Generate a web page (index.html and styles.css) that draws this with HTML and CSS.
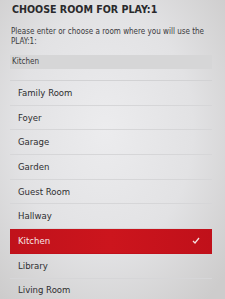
FILE: index.html
```html
<!DOCTYPE html>
<html>
<head>
<meta charset="utf-8">
<link rel="stylesheet" href="styles.css">
</head>
<body>
<div class="screen">
  <h1 class="title">CHOOSE ROOM FOR PLAY:1</h1>
  <p class="prompt">Please enter or choose a room where you will use the PLAY:1:</p>
  <div class="input">Kitchen</div>
  <ul class="rooms">
    <li class="room">Family Room</li>
    <li class="room">Foyer</li>
    <li class="room">Garage</li>
    <li class="room">Garden</li>
    <li class="room">Guest Room</li>
    <li class="room">Hallway</li>
    <li class="room selected">Kitchen<span class="check"><svg width="8" height="7" viewBox="0 0 8 7"><path d="M1 4 L3 6 L7 1" fill="none" stroke="#f4e0e0" stroke-width="1.3"/></svg></span></li>
    <li class="room">Library</li>
    <li class="room">Living Room</li>
  </ul>
</div>
</body>
</html>
```
FILE: styles.css
```css
html, body {
  margin: 0;
  padding: 0;
  width: 225px;
  height: 299px;
  overflow: hidden;
}
body {
  background: radial-gradient(ellipse 160px 220px at 105px 130px, #ececee 0%, #e2e2e4 55%, #cdcccc 100%);
  font-family: "Liberation Sans Narrow", "DejaVu Sans Condensed", sans-serif;
  color: #2e2e30;
}
.screen {
  padding: 2px 13px 0 10px;
  display: flex;
  flex-direction: column;
}
.title {
  margin: 0 0 0 2px;
  font-size: 10.6px;
  font-weight: bold;
  line-height: 14px;
  color: #2a2a2c;
}
.prompt {
  margin: 11px -8px 0 1px;
  font-size: 8px;
  line-height: 9.5px;
  color: #3a3a3c;
}
.input {
  margin-top: 9px;
  height: 14px;
  background: #d6d6d7;
  font-size: 8px;
  line-height: 14px;
  padding-left: 2px;
  color: #3a3a3c;
}
.rooms {
  list-style: none;
  margin: 11px 0 0 0;
  padding: 0;
  border-top: 1px solid #d2d2d4;
}
.room {
  height: 24.7px;
  box-sizing: border-box;
  border-bottom: 1px solid #d6d6d8;
  font-size: 9.5px;
  line-height: 24px;
  padding-left: 8px;
  display: flex;
  justify-content: space-between;
  align-items: center;
}
.selected {
  background: linear-gradient(90deg, #c0121b, #cc151d 50%, #c0101a);
  color: #f6e6e6;
  border-bottom-color: #c0101a;
}
.check {
  display: flex;
  margin-right: 12px;
}
```
